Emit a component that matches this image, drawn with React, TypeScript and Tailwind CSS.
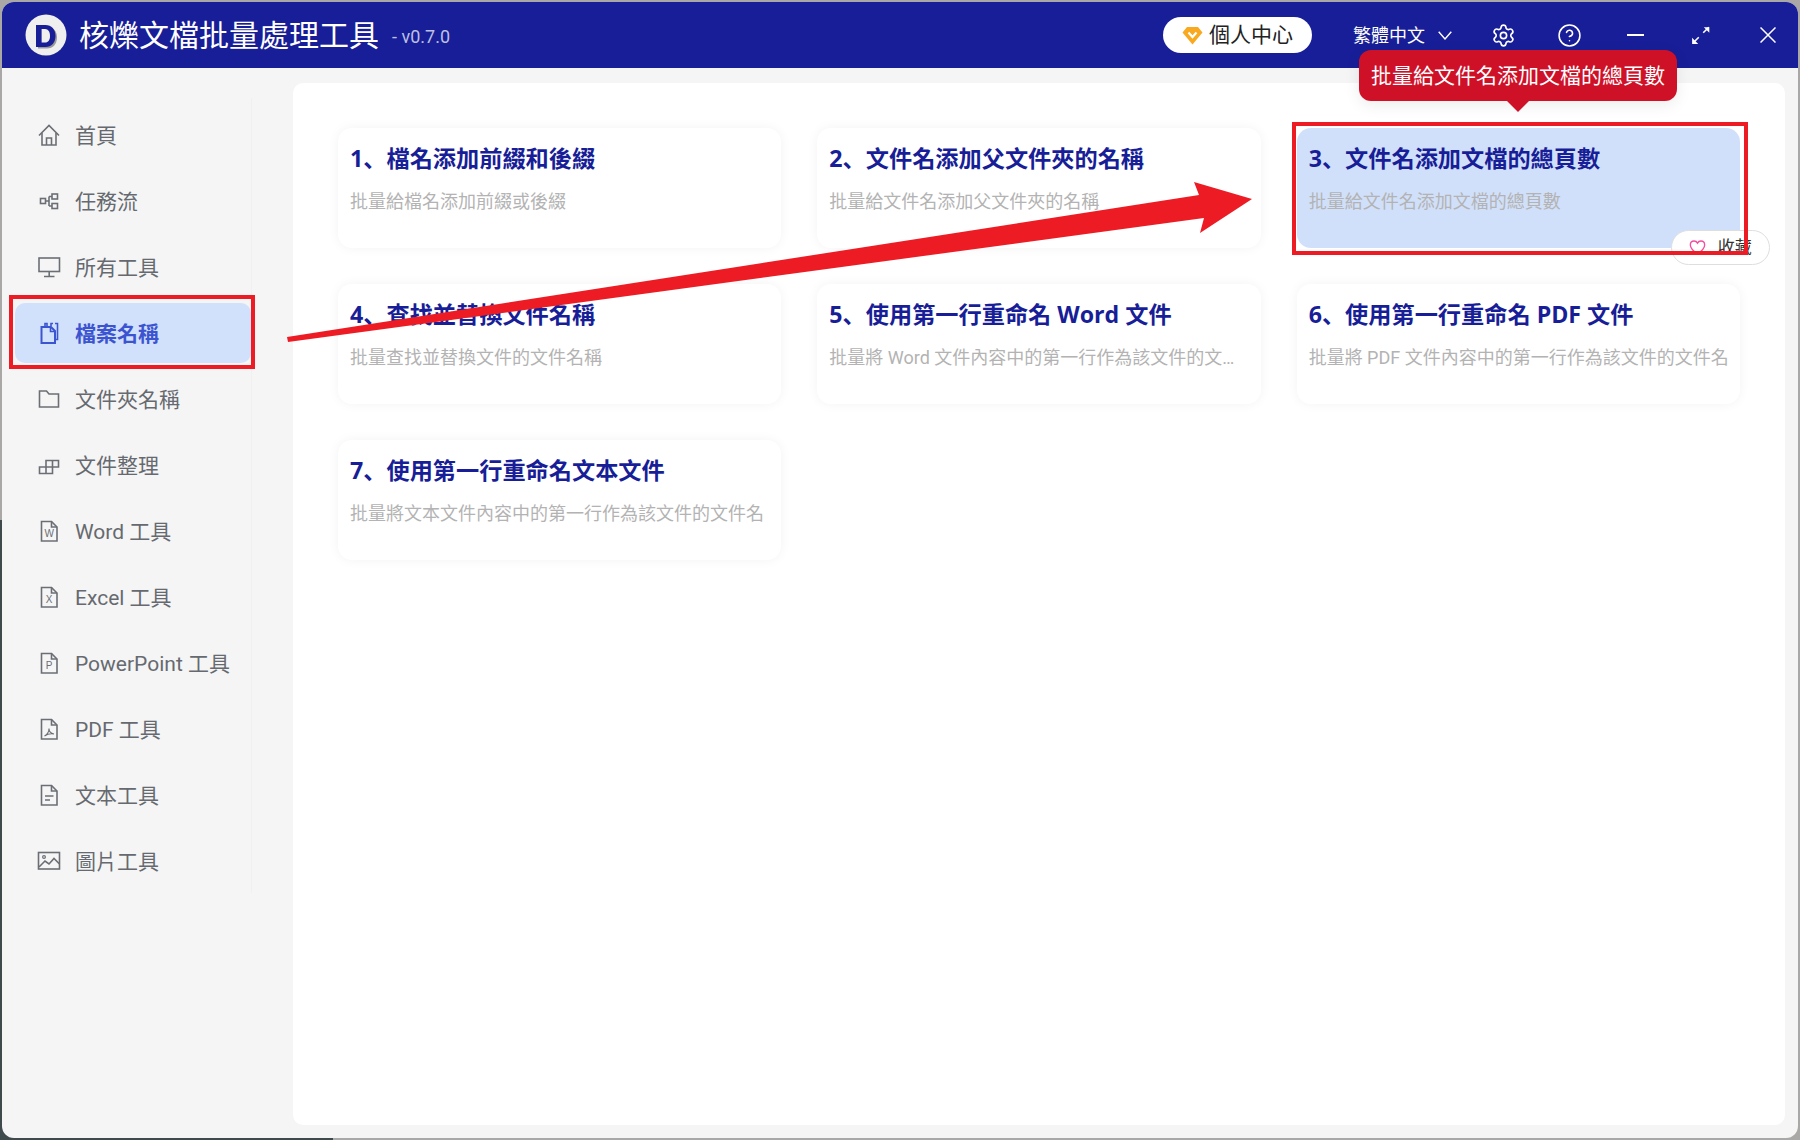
import React from "react";
import { Settings, CircleHelp } from "lucide-react";

type IconProps = { className?: string };

const Svg = ({ className, children, w = 24, h = 24 }: IconProps & { children: React.ReactNode; w?: number; h?: number }) => (
  <svg width={w} height={h} viewBox={`0 0 ${w} ${h}`} fill="none" stroke="currentColor" strokeWidth={1.6} className={className}>
    {children}
  </svg>
);

const FileShape = ({ children, className }: IconProps & { children?: React.ReactNode }) => (
  <Svg className={className}>
    <path d="M4.5 2.5H14.5L20 8V22H4.5Z" />
    <path d="M14.5 2.5V8H20" />
    {children}
  </Svg>
);

const FileLetter = ({ letter }: { letter: string }) => (
  <FileShape>
    <text x="12.2" y="18" textAnchor="middle" fontSize="10" stroke="none" fill="currentColor" fontFamily="'Liberation Sans', sans-serif">
      {letter}
    </text>
  </FileShape>
);

const icons: Record<string, React.ReactNode> = {
  home: (
    <Svg>
      <path d="M2 12.5L12 2.5L22 12.5" />
      <path d="M5 10V22H19V10" />
      <path d="M9.5 22V15H14.5V22" />
    </Svg>
  ),
  flow: (
    <Svg>
      <rect x="3.5" y="9.5" width="5" height="5" />
      <rect x="15" y="5" width="5.5" height="5" />
      <rect x="15" y="14.5" width="5.5" height="5" />
      <path d="M8.5 12H12M12 7.5V17M12 7.5H15M12 17H15" />
    </Svg>
  ),
  monitor: (
    <Svg>
      <rect x="2" y="3" width="20.5" height="13.5" />
      <path d="M12.2 16.5V21M7 21.5H17.5" />
    </Svg>
  ),
  doc: (
    <Svg>
      <path d="M8 5V2.5H10V5M14 5V2.5H16M18 2.5H20.5V18.5H18" />
      <path d="M4.5 6H14L18 10V22H4.5Z" strokeWidth={2} />
      <path d="M13.5 6V10.5H18" />
    </Svg>
  ),
  folder: (
    <Svg>
      <path d="M2.5 4H9.5L12 7H21.5V20H2.5Z" />
    </Svg>
  ),
  layout: (
    <Svg>
      <path d="M2.5 14H9V20.5H2.5ZM9 14H15.5V20.5H9ZM9 7.5H15.5V14H9ZM15.5 7.5H21.5V14H15.5Z" />
    </Svg>
  ),
  word: <FileLetter letter="W" />,
  excel: <FileLetter letter="X" />,
  ppt: <FileLetter letter="P" />,
  pdf: (
    <FileShape>
      <path d="M7.5 19C10 17.5 12 14 12 11.5C12 14.5 14 16.5 17 17C14 16.5 10.5 17 7.5 19Z" strokeWidth={1.1} />
    </FileShape>
  ),
  text: (
    <FileShape>
      <path d="M8 13H16.5M8 17H13" />
    </FileShape>
  ),
  image: (
    <Svg>
      <rect x="1.5" y="3.5" width="21" height="16.5" />
      <circle cx="7" cy="8" r="1.4" strokeWidth={1.2} />
      <path d="M2 18L8 12L12 15L17 9.5L22.5 15" />
    </Svg>
  ),
};

const navItems = [
  ["首頁", "home"],
  ["任務流", "flow"],
  ["所有工具", "monitor"],
  ["檔案名稱", "doc"],
  ["文件夾名稱", "folder"],
  ["文件整理", "layout"],
  ["Word 工具", "word"],
  ["Excel 工具", "excel"],
  ["PowerPoint 工具", "ppt"],
  ["PDF 工具", "pdf"],
  ["文本工具", "text"],
  ["圖片工具", "image"],
];

const cards = [
  ["1", "檔名添加前綴和後綴", "批量給檔名添加前綴或後綴"],
  ["2", "文件名添加父文件夾的名稱", "批量給文件名添加父文件夾的名稱"],
  ["3", "文件名添加文檔的總頁數", "批量給文件名添加文檔的總頁數"],
  ["4", "查找並替換文件名稱", "批量查找並替換文件的文件名稱"],
  ["5", "使用第一行重命名 Word 文件", "批量將 Word 文件內容中的第一行作為該文件的文件名"],
  ["6", "使用第一行重命名 PDF 文件", "批量將 PDF 文件內容中的第一行作為該文件的文件名"],
  ["7", "使用第一行重命名文本文件", "批量將文本文件內容中的第一行作為該文件的文件名"],
];

function Card({ n, title, desc }: { n: string; title: string; desc: string }) {
  const active = n === "3";
  return (
    <div
      className={
        active
          ? "relative h-[120px] min-w-0 rounded-[14px] bg-[#d1e0fa] pl-[12px] pr-[8px] pt-[11px]"
          : "relative h-[120px] min-w-0 rounded-[14px] bg-white pl-[12px] pr-[8px] pt-[11px] shadow-[0_0_12px_rgba(0,0,0,0.05)]"
      }
    >
      <div className="h-[36px] truncate font-['Open_Sans','Noto_Sans_CJK_TC',sans-serif] text-[23.2px] font-bold leading-[36px] text-[#181e97]">
        {n}
        <span className="font-['Noto_Sans_CJK_JP',sans-serif]">、</span>
        {title}
      </div>
      <div
        className={
          n === "5"
            ? "mt-[13px] mr-[14px] truncate text-[18px] leading-[28px] text-[#b3b3b3]"
            : "mt-[13px] truncate text-[18px] leading-[28px] text-[#b3b3b3]"
        }
      >
        {desc}
      </div>
      {active && (
        <div className="absolute left-[374px] top-[102px] flex h-[35px] w-[99px] items-center rounded-full border border-[#dedede] bg-white pl-[17px] text-[17px] text-[#333333]">
          <svg width="17" height="15" viewBox="0 0 24 22" fill="none" stroke="#f0509f" strokeWidth="2">
            <path d="M12 20.5C5 15.5 1.5 11.5 1.5 7.2C1.5 3.8 4 1.5 7 1.5C9 1.5 11 2.6 12 4.5C13 2.6 15 1.5 17 1.5C20 1.5 22.5 3.8 22.5 7.2C22.5 11.5 19 15.5 12 20.5Z" />
          </svg>
          <span className="ml-[12px] mt-[1px]">收藏</span>
        </div>
      )}
    </div>
  );
}

export default function App() {
  return (
    <div className="relative h-[1140px] w-[1800px] overflow-hidden bg-[#aaa8a6] pb-[2px] pl-[2px] pr-[2px] pt-[2px] font-['Roboto','Noto_Sans_CJK_TC',sans-serif]">
      <div className="absolute bottom-0 left-0 top-[520px] w-[333px] bg-[#3f4a4d]" />
      <div className="relative flex h-full flex-col overflow-hidden rounded-[12px] bg-[#f5f5f5]">
        <header className="flex h-[66px] shrink-0 items-center bg-[#181e97] pl-[23px] text-white">
          <svg width="42" height="42" viewBox="0 0 42 42" className="shrink-0">
            <circle cx="21" cy="21" r="20.5" fill="#efefef" />
            <path d="M13 13H22C28 13 32 17 32 23.5C32 30 28 34.5 22 34.5H13Z" fill="#9a9a9a" />
            <path d="M11 11H20.5C26.5 11 30.5 15.5 30.5 22C30.5 28.5 26.5 33 20.5 33H11Z" fill="#181e97" />
            <path d="M16.6 15H20C23.3 15 25 18 25 22C25 26 23.3 28.5 20 28.5H16.6Z" fill="#efefef" />
          </svg>
          <div className="ml-[12px] mt-[2px] text-[30px] leading-[40px]">核爍文檔批量處理工具</div>
          <div className="ml-[13px] mt-[3px] text-[18px] text-[#bcc0e2]">- v0.7.0</div>
          <div className="ml-auto flex h-[36px] w-[149px] items-center rounded-full bg-white pl-[19px] text-[21px] text-[#222222]">
            <svg width="21" height="19" viewBox="0 0 21 19">
              <path d="M5 1H16L20.5 6.5L10.5 18.5L0.5 6.5Z" fill="#f8a91f" />
              <path d="M6.5 6.5L10.5 11L14.5 6.5" fill="none" stroke="#ffffff" strokeWidth="2.2" />
            </svg>
            <span className="ml-[6px] mt-[1px]">個人中心</span>
          </div>
          <div className="ml-[41px] flex items-center text-[18px]">
            <span>繁體中文</span>
            <svg width="14" height="9" viewBox="0 0 14 9" fill="none" stroke="currentColor" strokeWidth="1.4" className="ml-[13px]">
              <path d="M0.7 0.7L7 8L13.3 0.7" />
            </svg>
          </div>
          <div className="ml-[21px] flex gap-[6px]">
            <div className="flex h-[40px] w-[60px] items-center justify-center">
              <Settings size={25} strokeWidth={1.6} />
            </div>
            <div className="flex h-[40px] w-[60px] items-center justify-center">
              <CircleHelp size={25} strokeWidth={1.5} />
            </div>
            <div className="flex h-[40px] w-[60px] items-center justify-center">
              <div className="h-[2px] w-[17px] bg-white" />
            </div>
            <div className="flex h-[40px] w-[60px] items-center justify-center">
              <svg width="20" height="20" viewBox="0 0 18 18" fill="none" stroke="#ffffff" strokeWidth="1.4">
                <path d="M2 16L7 11M11 7L16 2" />
                <path d="M11.5 2H16.5V7" fill="#ffffff" stroke="none" />
                <path d="M1 11.5V17H6.5" fill="#ffffff" stroke="none" />
              </svg>
            </div>
            <div className="ml-[1px] flex h-[40px] w-[60px] items-center justify-center">
              <svg width="16" height="16" viewBox="0 0 16 16" fill="none" stroke="#ffffff" strokeWidth="1.5">
                <path d="M0.5 0.5L15.5 15.5M15.5 0.5L0.5 15.5" />
              </svg>
            </div>
          </div>
        </header>
        <div className="flex min-h-0 flex-1">
          <aside className="w-[291px] shrink-0 pt-[30px]">
            <nav className="flex w-[250px] flex-col gap-[6px] border-r border-[#f0f0f0] pb-[2px] pt-[7px]">
              {navItems.map(([label, icon]) => {
                const active = label === "檔案名稱";
                return (
                  <div
                    key={label}
                    className={
                      active
                        ? "ml-[13px] flex h-[60px] items-center rounded-[10px] bg-[#d1e1fc] pl-[22px] text-[21px] font-bold text-[#3d54d0]"
                        : "ml-[13px] flex h-[60px] items-center pl-[22px] text-[21px] text-[#666a70]"
                    }
                  >
                    <span className={active ? "w-[38px] shrink-0 text-[#3d54d0]" : "w-[38px] shrink-0 text-[#6b6f75]"}>{icons[icon]}</span>
                    <span className="mt-[3px] whitespace-nowrap">{label}</span>
                  </div>
                );
              })}
            </nav>
          </aside>
          <main className="min-w-0 flex-1 pb-[13px] pr-[13px] pt-[15px]">
            <div className="h-full rounded-[10px] bg-white px-[45px] pt-[45px]">
              <div className="grid grid-cols-3 gap-[36px]">
                {cards.map(([n, title, desc]) => (
                  <Card key={n} n={n} title={title} desc={desc} />
                ))}
              </div>
            </div>
          </main>
        </div>
      </div>

      <div className="absolute left-[1359px] top-[50px] flex h-[51px] w-[318px] items-center justify-center rounded-[12px] bg-[#cf1128] pt-[3px] text-[21px] text-white shadow-[0_4px_16px_rgba(0,0,0,0.08)]">
        批量給文件名添加文檔的總頁數
      </div>
      <div className="absolute left-[1507px] top-[101px] h-0 w-0 border-x-[11px] border-t-[11px] border-x-transparent border-t-[#cf1128]" />

      <div className="absolute left-[9px] top-[295px] h-[74px] w-[246px] border-[4px] border-[#ed1c24]" />
      <div className="absolute left-[1292px] top-[122px] h-[133px] w-[456px] border-[4px] border-[#ed1c24]" />
      <svg width="1800" height="1140" viewBox="0 0 1800 1140" className="pointer-events-none absolute left-0 top-0">
        <polygon points="287,337 1199,195 1194,182 1252,199 1200,233 1204,218 288,342" fill="#ed1c24" />
      </svg>
    </div>
  );
}
